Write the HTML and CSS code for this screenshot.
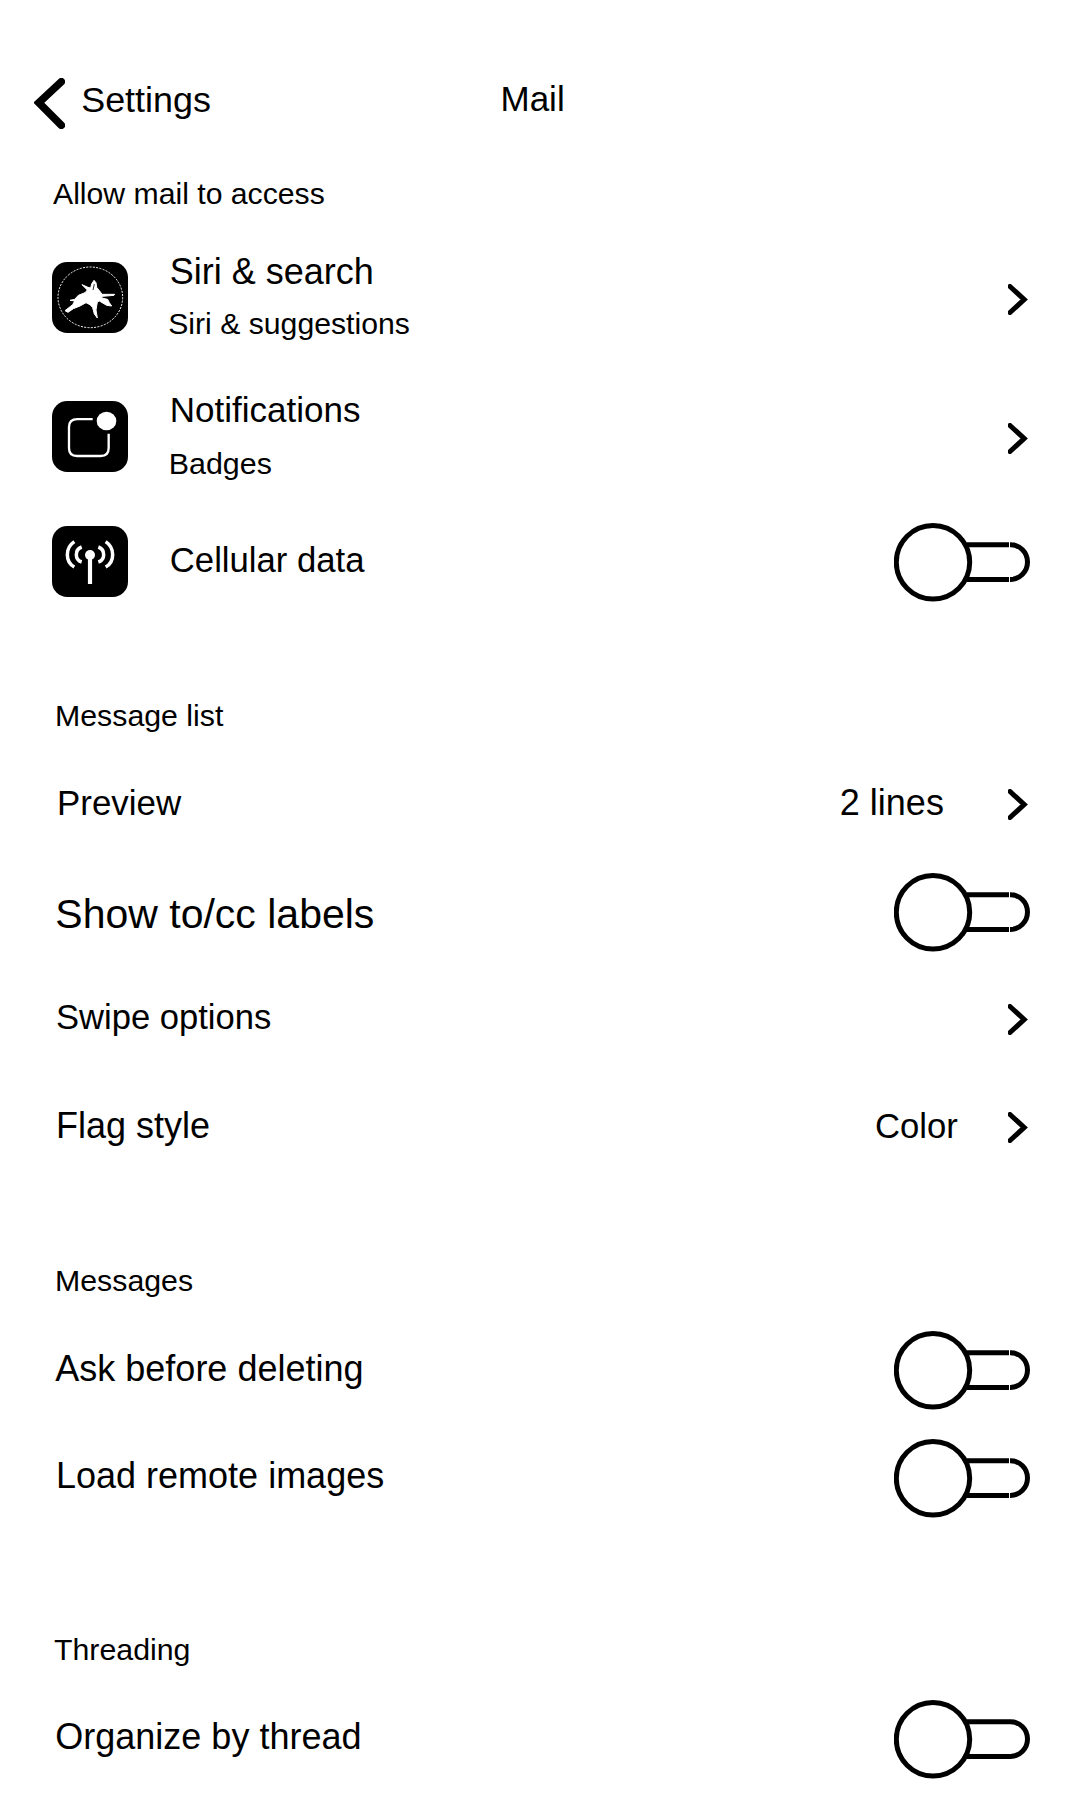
FILE: index.html
```html
<!DOCTYPE html>
<html lang="en">
<head>
<meta charset="utf-8">
<title>Mail</title>
<link rel="stylesheet" href="styles.css">
</head>
<body>
<svg width="0" height="0" class="symbols" aria-hidden="true">
  <symbol id="chevron" viewBox="0 0 20 31"><path d="M2 2.500 16.200 15.500 2 28.500" fill="none" stroke="#000" stroke-width="5" stroke-linecap="round"/></symbol>
  <symbol id="toggle" viewBox="0 0 136 79">
    <path d="M73 21.800H116.500A17 17.300 0 0 1 116.500 56.400H73" fill="none" stroke="#000" stroke-width="5"/>
    <circle cx="39" cy="39.300" r="36.700" fill="#fff" stroke="#000" stroke-width="5"/>
  </symbol>
</svg>
<header class="header">
  <svg class="back" viewBox="0 0 31 51"><path d="M27.300 3.700 4.800 24.800 27.300 47.300" fill="none" stroke="#000" stroke-width="7.600" stroke-linecap="round"/></svg>
  <span class="back-label">Settings</span>
  <h1 class="title">Mail</h1>
</header>
<main>
  <h2 class="section access">Allow mail to access</h2>
  <div class="row siri">
    <svg class="tile" viewBox="0 0 228 213"><rect width="228" height="213" rx="46"/>
      <g transform="translate(-36 -66)">
        <ellipse cx="151" cy="172" rx="97" ry="91" fill="none" stroke="#fff" stroke-width="3" stroke-dasharray="6 4"/>
        <path fill="#fff" stroke="#fff" stroke-width="3" d="M162 121 168 128 170 142 182 157 186 163 224 163 222 166 188 169 185 174 203 178 208 188 215 198 200 196 178 183 172 186 168 210 172 234 163 222 158 203 150 194 138 188 120 198 100 206 84 217 75 212 98 194 104 183 90 181 104 178 115 166 135 158 142 150 126 134 144 142 152 144 155 132Z"/>
        <path d="m163 132-4 18" stroke="#000" stroke-width="2.500"/>
      </g>
    </svg>
    <div class="text"><span class="label">Siri &amp; search</span><span class="sub">Siri &amp; suggestions</span></div>
    <svg class="chevron"><use href="#chevron"/></svg>
  </div>
  <div class="row notifications">
    <svg class="tile" viewBox="0 0 228 213"><rect width="228" height="213" rx="46"/>
      <path d="M122 54.500H76Q51 54.500 51 78V141Q51 165 75 165H146Q170 165 170 141V98" fill="none" stroke="#fff" stroke-width="7"/>
      <ellipse cx="163.500" cy="60" rx="29.500" ry="28" fill="#fff"/>
    </svg>
    <div class="text"><span class="label">Notifications</span><span class="sub">Badges</span></div>
    <svg class="chevron"><use href="#chevron"/></svg>
  </div>
  <div class="row cellular">
    <svg class="tile" viewBox="0 0 228 213"><rect width="228" height="213" rx="46"/>
      <g fill="none" stroke="#fff"><path d="M114 88V174" stroke-width="12.500"/>
      <g stroke-width="10.500"><path d="M67 47Q46 61 46 86T67 123M89 63Q73 69 73 86T89 108M161 47Q182 61 182 86T161 123M139 63Q155 69 155 86T139 108"/></g></g>
      <circle cx="114" cy="87" r="15" fill="#fff"/>
    </svg>
    <div class="text"><span class="label">Cellular data</span></div>
    <svg class="toggle"><use href="#toggle"/><path d="M115.500 18V26M115.500 53V60" stroke="#fff"/></svg>
  </div>

  <h2 class="section list">Message list</h2>
  <div class="row preview"><span class="label">Preview</span><span class="value">2 lines</span><svg class="chevron"><use href="#chevron"/></svg></div>
  <div class="row show"><span class="label">Show to/cc labels</span><svg class="toggle"><use href="#toggle"/><path d="M115.500 18V26M115.500 53V60" stroke="#fff"/></svg></div>
  <div class="row swipe"><span class="label">Swipe options</span><svg class="chevron"><use href="#chevron"/></svg></div>
  <div class="row flag"><span class="label">Flag style</span><span class="value">Color</span><svg class="chevron"><use href="#chevron"/></svg></div>

  <h2 class="section messages">Messages</h2>
  <div class="row ask"><span class="label">Ask before deleting</span><svg class="toggle"><use href="#toggle"/><path d="M115.500 18V26M115.500 53V60" stroke="#fff"/></svg></div>
  <div class="row load"><span class="label">Load remote images</span><svg class="toggle"><use href="#toggle"/><path d="M115.500 18V26M115.500 53V60" stroke="#fff"/></svg></div>

  <h2 class="section threading">Threading</h2>
  <div class="row organize"><span class="label">Organize by thread</span><svg class="toggle"><use href="#toggle"/></svg></div>
</main>
</body>
</html>
```
FILE: styles.css
```css
* { box-sizing: border-box; }
body {
  margin: 0;
  width: 1080px;
  height: 1800px;
  overflow: hidden;
  background: #fff;
  color: #000;
  font: 36px/40px "Liberation Sans", Arial, sans-serif;
  white-space: nowrap;
}
.symbols { display: none; }
svg { display: block; flex: none; }
h1, h2 { margin: 0; font-weight: 400; }

.header { display: flex; align-items: flex-start; height: 150px; padding-left: 34px; }
.back { width: 31px; height: 51px; margin-top: 78px; }
.back-label { width: 419.300px; margin: 80px 0 0 16.200px; font-size: 35.900px; }
.title { margin-top: 79px; font-size: 35px; }

.section { padding-left: 55px; font-size: 30.300px; }
.access { height: 70px; padding: 24px 0 0 53px; font-size: 30.200px; }
.list { height: 130px; padding-top: 76px; }
.messages { height: 140px; padding-top: 81px; }
.threading { height: 160px; padding: 100px 0 0 54px; }

.row { display: flex; align-items: flex-start; padding-left: 55.300px; }
.row .label { flex: 1; }
.chevron { width: 20px; height: 31px; margin-right: 52px; }
.toggle { width: 136px; height: 79px; margin-right: 50px; }
.tile { width: 76px; height: 71px; }
.text { display: flex; flex: 1; flex-direction: column; padding-left: 41.800px; }
.text .label { flex: none; }
.sub { margin-left: -1.600px; font-size: 30.200px; }

.siri, .notifications, .cellular { padding-left: 52px; }
.siri { height: 140px; }
.siri .tile { margin-top: 42px; }
.siri .text { gap: 12px; padding-top: 32px; }
.siri .chevron { margin-top: 64px; }
.notifications { height: 140px; }
.notifications .tile { margin-top: 41px; }
.notifications .text { gap: 13px; padding-top: 30px; }
.notifications .label { font-size: 35px; }
.notifications .sub { margin-left: -1px; font-size: 30.400px; }
.notifications .chevron { margin-top: 63px; }
.cellular { height: 120px; }
.cellular .tile { margin-top: 26px; }
.cellular .text { padding-top: 40px; }
.cellular .label { font-size: 34.700px; }
.cellular .toggle { margin-top: 22.500px; }

.preview { height: 110px; padding-left: 57px; font-size: 34.900px; }
.preview .label, .preview .value { margin-top: 33px; }
.preview .value { width: 168.200px; font-size: 36px; }
.preview .chevron { margin-top: 39px; }
.show { height: 110px; font-size: 41px; }
.show .label { margin-top: 34px; }
.show .toggle { margin-top: 13px; }
.swipe { height: 100px; padding-left: 56px; font-size: 34.600px; }
.swipe .label { margin-top: 26.500px; }
.swipe .chevron { margin-top: 34px; }
.flag { height: 110px; padding-left: 56px; }
.flag .label, .flag .value { margin-top: 35.500px; }
.flag .value { width: 133px; font-size: 34.700px; }
.flag .chevron { margin-top: 42px; }
.ask { height: 110px; }
.ask .label { margin-top: 29px; }
.ask .toggle { margin-top: 11px; }
.load { height: 100px; padding-left: 56px; }
.load .label { margin-top: 25.500px; }
.load .toggle { margin-top: 9px; }
.organize { height: 110px; padding-left: 55.300px; }
.organize .label { margin-top: 27px; }
.organize .toggle { margin-top: 10px; }
```
